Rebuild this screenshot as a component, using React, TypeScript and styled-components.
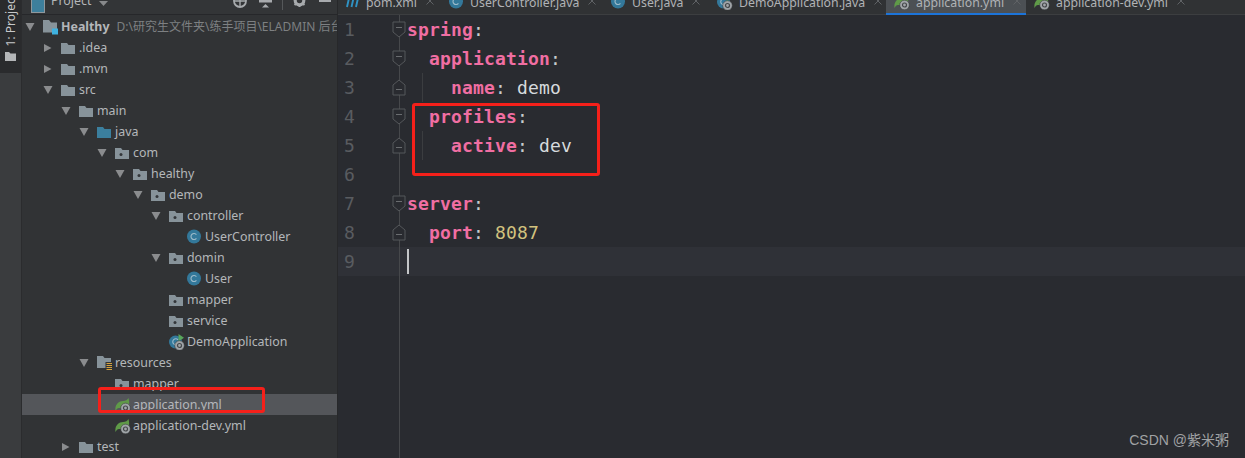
import React from "react";
import styled, { createGlobalStyle } from "styled-components";

const Global = createGlobalStyle`
  html, body { margin: 0; padding: 0; background: #292b30; overflow: hidden; }
  #root { width: 1245px; height: 458px; }
  * { box-sizing: border-box; }
`;

const Page = styled.div`
  position: relative;
  display: flex;
  width: 1245px;
  height: 458px;
  overflow: hidden;
  font-family: "Noto Sans", "Noto Sans CJK SC", sans-serif;
`;

const Strip = styled.aside`
  flex: 0 0 22px;
  background: #3a3c3e;
  border-right: 1px solid #2b2c2e;
`;
const StripTab = styled.div`
  height: 73px;
  background: #2a2b2d;
  display: flex;
  flex-direction: column;
  align-items: center;
  justify-content: flex-end;
  gap: 6px;
  padding: 0 0 12px 0;
  overflow: hidden;
`;
const StripLabel = styled.span`
  flex: none;
  writing-mode: vertical-rl;
  transform: rotate(180deg);
  font-size: 12px;
  line-height: 14px;
  color: #c6c8ca;
  white-space: nowrap;
`;
const StripFolder = styled.svg`
  flex: none;
`;

const Panel = styled.section`
  flex: 0 0 316px;
  display: flex;
  flex-direction: column;
  background: #313335;
  border-right: 1px solid #27282a;
  overflow: hidden;
`;
const PanelHeader = styled.header`
  flex: 0 0 15px;
  display: flex;
  align-items: flex-end;
  padding: 0 0 4px 9px;
  height: 15px;
  border-bottom: 1px solid #26272a;
  background: #333537;
`;
const ProjectSquare = styled.span`
  flex: none;
  width: 14px;
  height: 14px;
  margin-bottom: -3px;
  background: #3d7f9c;
  border: 1px solid #8f979c;
`;
const ProjectName = styled.span`
  flex: 0 0 39px;
  font-size: 12.4px;
  line-height: 18px;
  margin: 0 8px 0 6px;
  color: #b4b6b8;
`;
const HeaderCaret = styled.svg`
  flex: none;
  margin-bottom: 3px;
`;
const HeaderIcons = styled.div`
  display: flex;
  align-self: flex-start;
  align-items: flex-start;
  margin-left: 125px;
  gap: 12px;
  flex: none;
`;
const HeaderDivider = styled.span`
  width: 1px;
  height: 10px;
  background: #55585a;
  margin: 0 -2px 0 -2px;
`;
const HeaderMinus = styled.span`
  width: 12px;
  height: 2px;
  margin-left: 1px;
  background: #a7aaad;
`;
const Tree = styled.div`
  flex: 1;
  padding-top: 1px;
  display: flex;
  flex-direction: column;
`;
const Row = styled.div<{ $depth: number; $selected?: boolean }>`
  flex: 0 0 21px;
  height: 21px;
  display: flex;
  align-items: center;
  padding-left: ${(p) => 3 + p.$depth * 18}px;
  background: ${(p) => (p.$selected ? "#54565a" : "transparent")};
  white-space: nowrap;
`;
const Caret = styled.span`
  flex: 0 0 18px;
  height: 12px;
  display: flex;
  align-items: center;
`;
const IconSlot = styled.span`
  flex: 0 0 18px;
  height: 16px;
  display: flex;
  align-items: center;
`;
const Label = styled.span<{ $bold?: boolean }>`
  font-size: 12.4px;
  line-height: 21px;
  color: #b4b7ba;
  font-weight: ${(p) => (p.$bold ? 700 : 400)};
`;
const PathText = styled.span`
  font-size: 12px;
  line-height: 21px;
  color: #7d8082;
  margin-left: 7px;
`;

const Main = styled.main`
  flex: 1;
  display: flex;
  flex-direction: column;
  min-width: 0;
  background: #292b30;
`;
const TabBar = styled.nav`
  flex: 0 0 15px;
  height: 15px;
  display: flex;
  background: #303234;
  border-bottom: 1px solid #3c3e40;
`;
const Tab = styled.div<{ $active?: boolean; $width: number }>`
  flex: 0 0 ${(p) => p.$width}px;
  min-width: 0;
  height: 15px;
  display: flex;
  align-items: flex-start;
  padding-left: 8px;
  gap: 6px;
  white-space: nowrap;
  background: ${(p) => (p.$active ? "#4c5054" : "transparent")};
  border-bottom: ${(p) => (p.$active ? "2px solid #1c74d9" : "none")};
`;
const TabIcon = styled.span`
  flex: none;
  margin-top: -6px;
  display: flex;
`;
const TabText = styled.span`
  font-size: 12.3px;
  line-height: 16px;
  margin-top: -5px;
  color: #b0b3b6;
`;
const TabClose = styled.span`
  flex: none;
  margin-left: 3px;
  margin-top: -3px;
  display: flex;
`;

const Editor = styled.div`
  flex: 1;
  display: flex;
  flex-direction: column;
  font-family: "DejaVu Sans Mono", "Liberation Mono", monospace;
  font-size: 18px;
  letter-spacing: 0.16px;
`;
const CodeRow = styled.div<{ $current?: boolean }>`
  flex: 0 0 29px;
  display: flex;
  height: 29px;
  line-height: 29px;
  background: ${(p) => (p.$current ? "#2f3137" : "transparent")};
`;
const Gutter = styled.div`
  position: relative;
  flex: 0 0 62px;
  padding-left: 6px;
  color: #595c60;
  border-right: 1px solid #46484b;
`;
const FoldMark = styled.svg`
  position: absolute;
  right: -7px;
  top: 6px;
`;
const Filler = styled.div`
  flex: 1;
  display: flex;
`;
const Code = styled.div`
  padding-left: 7px;
  white-space: pre;
  display: flex;
  align-items: stretch;
`;
const Guide = styled.span`
  width: 1px;
  background: #3b3d40;
  margin: 0 21px 0 15px;
  align-self: stretch;
`;
const Key = styled.span`
  color: #f06ea2;
  font-weight: 700;
`;
const Punct = styled.span`
  color: #c6cacd;
`;
const Val = styled.span`
  color: #d6dadd;
`;
const Num = styled.span`
  color: #d2c27e;
`;
const Cursor = styled.span`
  width: 2px;
  height: 25px;
  margin: 2px 0 0 0;
  background: #c4c6c8;
`;
const Indent = styled.span<{ $w: number }>`
  width: ${(p) => p.$w}px;
  flex: none;
`;

const RedBox = styled.div<{ $x: number; $y: number; $w: number; $h: number }>`
  position: absolute;
  left: ${(p) => p.$x}px;
  top: ${(p) => p.$y}px;
  width: ${(p) => p.$w}px;
  height: ${(p) => p.$h}px;
  border: 3px solid #f5201a;
  border-radius: 3px;
  pointer-events: none;
`;
const Watermark = styled.div`
  position: absolute;
  right: 16px;
  top: 431px;
  font-family: "Liberation Sans", "Noto Sans CJK SC", sans-serif;
  font-size: 14px;
  line-height: 18px;
  color: #a0a2a4;
`;

const CaretIcon = ({ open }: { open?: boolean }) => (
  <svg width="10" height="10" viewBox="0 0 10 10">
    {open ? <path d="M0.5 1h9L5 9z" fill="#8a8c8e" /> : <path d="M1 1v8l7.500-4z" fill="#8a8c8e" />}
  </svg>
);

const folderPath = "M0 2h6l1.500 2H14v9H0z";
const FolderIcon = ({ color = "#87939a" }: { color?: string }) => (
  <svg width="14" height="14" viewBox="0 0 14 14">
    <path d={folderPath} fill={color} />
  </svg>
);
const PackageIcon = () => (
  <svg width="14" height="14" viewBox="0 0 14 14">
    <path d={folderPath} fill="#87939a" />
    <circle cx="6" cy="8.500" r="1.500" fill="#33363a" />
  </svg>
);
const ModuleIcon = () => (
  <svg width="16" height="16" viewBox="0 0 16 16">
    <path d="M0 1h6l2 2.500h6v10H0z" fill="#87939a" />
    <rect x="9" y="9.500" width="6" height="6" fill="#3fb2e0" />
  </svg>
);
const ResourceIcon = () => (
  <svg width="16" height="16" viewBox="0 0 16 16">
    <path d="M0 1h6l1.500 2H14v10H0z" fill="#87939a" />
    <rect x="8.500" y="7" width="7" height="9" fill="#313335" />
    <path d="M9.500 8.500h5.500M9.500 10.500h5.500M9.500 12.500h5.500M9.500 14.500h5.500" stroke="#d8a33c" strokeWidth="1" />
  </svg>
);
const ClassIcon = () => (
  <svg width="15" height="15" viewBox="0 0 15 15">
    <circle cx="7" cy="7.500" r="7" fill="#33789a" />
    <path d="M9.400 5.700a3 3 0 1 0 0 3.600" fill="none" stroke="#9dbccb" strokeWidth="1.100" />
  </svg>
);
const Gear = ({ x, y }: { x: number; y: number }) => (
  <g>
    <circle cx={x} cy={y} r="4.800" fill="#a0a5a8" stroke="#2e3032" strokeWidth="0.500" />
    <circle cx={x} cy={y} r="2" fill="none" stroke="#45484b" strokeWidth="1.200" />
  </g>
);
const SpringIcon = () => (
  <svg width="16" height="16" viewBox="0 0 16 16">
    <path d="M0.500 14C-0.500 8 3.500 4 8 4c2.500 0 4.500-1 5.500-3 1 3.500 1 7-1 10H4c-1.500 0-2.500 1-3.500 3z" fill="#5f9a48" />
    <Gear x={10.500} y={11} />
  </svg>
);
const RunClassIcon = () => (
  <svg width="16" height="16" viewBox="0 0 16 16">
    <circle cx="6.500" cy="8" r="6.500" fill="#33789a" />
    <path d="M9 5.800a3 3 0 1 0 0 4" fill="none" stroke="#9dbccb" strokeWidth="1.100" />
    <path d="M9.500 0v7.500l5.500-3.700z" fill="#58a65c" />
    <Gear x={10.500} y={11.500} />
  </svg>
);
const MavenIcon = () => (
  <svg width="14" height="15" viewBox="0 0 14 15">
    <path d="M1 13L3.500 2M5.500 13L8 2M10 13L12.500 2" stroke="#2f93c4" strokeWidth="1.900" fill="none" />
  </svg>
);
const CloseIcon = () => (
  <svg width="8" height="8" viewBox="0 0 8 8">
    <path d="M0.500 0.500l7 7M7.500 0.500l-7 7" stroke="#5f6265" strokeWidth="1" />
  </svg>
);
const FoldDown = () => (
  <FoldMark width="14" height="17" viewBox="0 0 14 17">
    <path d="M1 1h12v10l-6 5-6-5z" fill="#292b30" stroke="#55585b" />
    <path d="M4 6.500h6" stroke="#6a6d70" />
  </FoldMark>
);
const FoldUp = () => (
  <FoldMark width="14" height="17" viewBox="0 0 14 17">
    <path d="M1 16h12V6l-6-5-6 5z" fill="#292b30" stroke="#55585b" />
    <path d="M4 10.500h6" stroke="#6a6d70" />
  </FoldMark>
);

const HeaderGlobe = () => (
  <svg width="14" height="8" viewBox="0 6 14 8">
    <circle cx="7" cy="7" r="6" fill="none" stroke="#a7aaad" strokeWidth="1.800" />
    <path d="M7 1v12M1 7h12" stroke="#a7aaad" strokeWidth="1.400" />
  </svg>
);
const HeaderCollapse = () => (
  <svg width="13" height="8" viewBox="0 0 13 8">
    <rect width="13" height="2.500" fill="#a7aaad" />
    <path d="M6.500 4l3.500 3.500H3z" fill="#a7aaad" />
  </svg>
);
const HeaderGear = () => (
  <svg width="13" height="7" viewBox="0 6 13 7">
    <circle cx="6.500" cy="6.500" r="4.300" fill="none" stroke="#a7aaad" strokeWidth="3.200" />
    <path d="M6.500 10v3M1.500 11l2-1.500M11.500 11l-2-1.500" stroke="#a7aaad" strokeWidth="2" />
  </svg>
);

type Kind = "module" | "folder" | "source" | "package" | "resource" | "class" | "run" | "spring";
const icons: Record<Kind, React.ReactNode> = {
  module: <ModuleIcon />,
  folder: <FolderIcon />,
  source: <FolderIcon color="#3b7f9e" />,
  package: <PackageIcon />,
  resource: <ResourceIcon />,
  class: <ClassIcon />,
  run: <RunClassIcon />,
  spring: <SpringIcon />,
};

type Node = { d: number; c?: "open" | "closed"; k: Kind; t: string; sel?: boolean };
const nodes: Node[] = [
  { d: 1, c: "closed", k: "folder", t: ".idea" },
  { d: 1, c: "closed", k: "folder", t: ".mvn" },
  { d: 1, c: "open", k: "folder", t: "src" },
  { d: 2, c: "open", k: "folder", t: "main" },
  { d: 3, c: "open", k: "source", t: "java" },
  { d: 4, c: "open", k: "package", t: "com" },
  { d: 5, c: "open", k: "package", t: "healthy" },
  { d: 6, c: "open", k: "package", t: "demo" },
  { d: 7, c: "open", k: "package", t: "controller" },
  { d: 8, k: "class", t: "UserController" },
  { d: 7, c: "open", k: "package", t: "domin" },
  { d: 8, k: "class", t: "User" },
  { d: 7, k: "package", t: "mapper" },
  { d: 7, k: "package", t: "service" },
  { d: 7, k: "run", t: "DemoApplication" },
  { d: 3, c: "open", k: "resource", t: "resources" },
  { d: 4, k: "package", t: "mapper" },
  { d: 4, k: "spring", t: "application.yml", sel: true },
  { d: 4, k: "spring", t: "application-dev.yml" },
  { d: 2, c: "closed", k: "folder", t: "test" },
];

const tabs = [
  { w: 103, icon: <MavenIcon />, t: "pom.xml" },
  { w: 162, icon: <ClassIcon />, t: "UserController.java" },
  { w: 106, icon: <ClassIcon />, t: "User.java" },
  { w: 177, icon: <RunClassIcon />, t: "DemoApplication.java" },
  { w: 140, icon: <SpringIcon />, t: "application.yml", active: true },
  { w: 160, icon: <SpringIcon />, t: "application-dev.yml" },
];

const K = ({ k }: { k: string }) => (
  <>
    <Key>{k}</Key>
    <Punct>:</Punct>
  </>
);

export default function App() {
  return (
    <Page>
      <Global />
      <Strip>
        <StripTab>
          <StripLabel>1: Project</StripLabel>
          <StripFolder width="11" height="9" viewBox="0 0 11 9">
            <path d="M0 0h4l1.500 1.500H11V9H0z" fill="#b4b6b8" />
          </StripFolder>
        </StripTab>
      </Strip>
      <Panel>
        <PanelHeader>
          <ProjectSquare />
          <ProjectName>Project</ProjectName>
          <HeaderCaret width="9" height="6" viewBox="0 0 9 6">
            <path d="M0 0h9L4.500 5z" fill="#87898b" />
          </HeaderCaret>
          <HeaderIcons>
            <HeaderGlobe />
            <HeaderCollapse />
            <HeaderDivider />
            <HeaderGear />
            <HeaderMinus />
          </HeaderIcons>
        </PanelHeader>
        <Tree>
          <Row $depth={0}>
            <Caret>
              <CaretIcon open />
            </Caret>
            <IconSlot>
              <ModuleIcon />
            </IconSlot>
            <Label $bold>Healthy</Label>
            <PathText>D:\研究生文件夹\练手项目\ELADMIN 后台管理系统</PathText>
          </Row>
          {nodes.map((n, i) => (
            <Row key={i} $depth={n.d} $selected={n.sel}>
              <Caret>{n.c && <CaretIcon open={n.c === "open"} />}</Caret>
              <IconSlot>{icons[n.k]}</IconSlot>
              <Label>{n.t}</Label>
            </Row>
          ))}
        </Tree>
      </Panel>
      <Main>
        <TabBar>
          {tabs.map((t) => (
            <Tab key={t.t} $width={t.w} $active={t.active}>
              <TabIcon>{t.icon}</TabIcon>
              <TabText>{t.t}</TabText>
              <TabClose>
                <CloseIcon />
              </TabClose>
            </Tab>
          ))}
        </TabBar>
        <Editor>
          <CodeRow>
            <Gutter>
              1
              <FoldDown />
            </Gutter>
            <Code>
              <K k="spring" />
            </Code>
          </CodeRow>
          <CodeRow>
            <Gutter>
              2
              <FoldDown />
            </Gutter>
            <Code>
              <Indent $w={22} />
              <K k="application" />
            </Code>
          </CodeRow>
          <CodeRow>
            <Gutter>
              3
              <FoldUp />
            </Gutter>
            <Code>
              <Guide />
              <Indent $w={7} />
              <K k="name" />
              <Val> demo</Val>
            </Code>
          </CodeRow>
          <CodeRow>
            <Gutter>
              4
              <FoldDown />
            </Gutter>
            <Code>
              <Indent $w={22} />
              <K k="profiles" />
            </Code>
          </CodeRow>
          <CodeRow>
            <Gutter>
              5
              <FoldUp />
            </Gutter>
            <Code>
              <Guide />
              <Indent $w={7} />
              <K k="active" />
              <Val> dev</Val>
            </Code>
          </CodeRow>
          <CodeRow>
            <Gutter>6</Gutter>
            <Code />
          </CodeRow>
          <CodeRow>
            <Gutter>
              7
              <FoldDown />
            </Gutter>
            <Code>
              <K k="server" />
            </Code>
          </CodeRow>
          <CodeRow>
            <Gutter>
              8
              <FoldUp />
            </Gutter>
            <Code>
              <Indent $w={22} />
              <K k="port" />
              <Num> 8087</Num>
            </Code>
          </CodeRow>
          <CodeRow $current>
            <Gutter>9</Gutter>
            <Code>
              <Cursor />
            </Code>
          </CodeRow>
          <Filler>
            <Gutter />
          </Filler>
        </Editor>
      </Main>
      <RedBox $x={412} $y={103} $w={188} $h={73} />
      <RedBox $x={98} $y={387} $w={167} $h={26} />
      <Watermark>CSDN @紫米粥</Watermark>
    </Page>
  );
}
